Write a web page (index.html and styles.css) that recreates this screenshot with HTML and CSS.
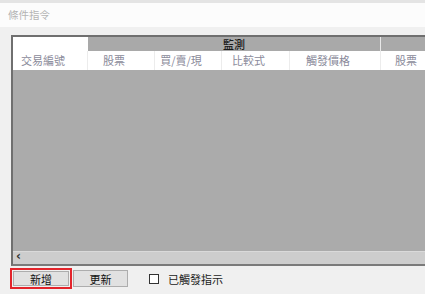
FILE: index.html
```html
<!DOCTYPE html>
<html lang="zh-Hant">
<head>
    <meta charset="UTF-8">
    <meta name="viewport" content="width=device-width, initial-scale=1.0">
    <title>條件指令</title>
    <link rel="stylesheet" href="styles.css">
</head>
<body>

<div class="title-bar">條件指令</div>

<div class="grid-frame">
    <div class="grid-head">
        <div class="head-blank"></div>
        <div class="group monitor">監測</div>
        <div class="group-sep"></div>
        <div class="group rest"></div>

        <div class="col c1">交易編號</div>
        <div class="col c2">股票</div>
        <div class="col c3">買/賣/現</div>
        <div class="col c4">比較式</div>
        <div class="col c5">觸發價格</div>
        <div class="col c6">股票</div>
    </div>
    <div class="grid-body"></div>
    <div class="hscroll">
        <span class="arrow">&lsaquo;</span>
    </div>
</div>

<div class="toolbar">
    <div class="focus-ring"><button class="btn btn-add">新增</button></div>
    <button class="btn btn-refresh">更新</button>
    <label class="check"><span class="box"></span>已觸發指示</label>
</div>

</body>
</html>
```

FILE: styles.css
```css
body {
    margin: 0;
    width: 425px;
    height: 294px;
    overflow: hidden;
    background-color: #f0f0f0;
    font-family: "Noto Sans CJK TC", "Noto Sans", sans-serif;
}
.title-bar {
    height: 24px;
    border-top: 3px solid #e4e4e4;
    background-color: #fcfcfc;
    color: #b4b4b4;
    font-size: 10.5px;
    line-height: 23px;
    padding-left: 8px;
}
.grid-frame {
    margin: 8px 0 0 11px;
    width: 412px;
    overflow: hidden;
    border-top: 2px solid #6f6f6f;
    border-left: 2px solid #6f6f6f;
    border-bottom: 2px solid #7a7a7a;
}
.grid-head {
    display: grid;
    grid-template-columns: 75px 67px 67px 68px 90px 1px 1fr;
    grid-template-rows: 14px 19px;
    background-color: #fff;
}
.head-blank {
    grid-column: 1;
    grid-row: 1;
    background-color: #fff;
}
.group {
    background-color: #a9a9a9;
    grid-row: 1;
}
.monitor {
    grid-column: 2 / 6;
    text-align: center;
    font-size: 11px;
    line-height: 14px;
    color: #1a1a1a;
    font-weight: 500;
}
.group-sep {
    grid-column: 6;
    grid-row: 1;
    background-color: #e8e8e8;
}
.rest {
    grid-column: 7;
}
.col {
    grid-row: 2;
    font-size: 11px;
    line-height: 19px;
    color: #8a8a9a;
    text-align: center;
    padding-right: 14px;
    border-right: 1px solid #ececec;
    white-space: nowrap;
}
.c1 { grid-column: 1; }
.c2 { grid-column: 2; }
.c3 { grid-column: 3; }
.c4 { grid-column: 4; }
.c5 { grid-column: 5 / 7; }
.c6 { grid-column: 7; text-align: left; padding-left: 14px; border-right: none; }
.grid-body {
    height: 181px;
    background-color: #ababab;
}
.hscroll {
    height: 12px;
    background-color: #cdcdcd;
    border-top: 1px solid #dadada;
    position: relative;
}
.arrow {
    position: absolute;
    left: 3px;
    top: -3px;
    font-size: 12px;
    color: #333;
    font-family: "DejaVu Sans", sans-serif;
    font-weight: bold;
}
.toolbar {
    display: flex;
    align-items: center;
    margin: 2px 0 0 10px;
}
.focus-ring {
    border: 2px solid #e3242b;
    padding: 1px;
    display: flex;
}
.btn {
    font-family: "Noto Sans CJK TC", sans-serif;
    font-size: 11px;
    color: #111;
    background-color: #e1e1e1;
    border: 1px solid #adadad;
    padding: 0;
    line-height: 14px;
}
.btn-add {
    width: 56px;
    height: 15px;
}
.btn-refresh {
    width: 55px;
    height: 17px;
    margin-left: 1px;
}
.check {
    display: flex;
    align-items: center;
    margin-left: 21px;
    font-size: 11px;
    color: #222;
}
.box {
    width: 8px;
    height: 8px;
    border: 1px solid #333;
    background-color: #fff;
    margin-right: 9px;
}
```
